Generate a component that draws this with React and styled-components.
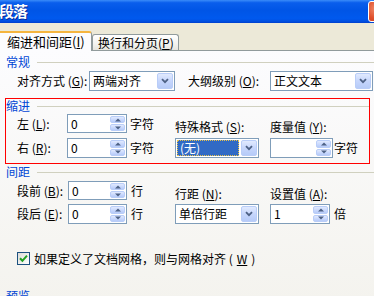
import React from 'react';
import styled, { createGlobalStyle } from 'styled-components';

const GlobalStyle = createGlobalStyle`
  html, body { margin: 0; padding: 0; background: #ECE9D8; }
  body {
    font-family: "Noto Sans CJK SC", "Liberation Sans", sans-serif;
    font-size: 12px;
    color: #000;
  }
  * { box-sizing: border-box; }
`;

const Dialog = styled.div`
  width: 374px;
  height: 296px;
  overflow: hidden;
  display: flex;
  flex-direction: column;
  background: #ECE9D8;
`;

const TitleBar = styled.div`
  height: 23px;
  flex-shrink: 0;
  display: flex;
  align-items: flex-start;
  justify-content: space-between;
  background: linear-gradient(180deg, #3A8CF9 0%, #0A5EEC 12%, #0055E6 45%, #0059EE 80%, #0050E2 92%, #003FCC 100%);
`;

const Title = styled.div`
  color: #fff;
  font-weight: bold;
  font-size: 15px;
  line-height: 21px;
  margin-left: -1px;
  letter-spacing: -1px;
  text-shadow: 1px 1px 0 #0A2A9A;
`;

const CloseButton = styled.div`
  width: 21px;
  height: 21px;
  margin-top: 1px;
  margin-right: -15px;
  flex-shrink: 0;
  border: 1px solid #fff;
  border-radius: 3px;
  background: radial-gradient(circle at 35% 35%, #F08A6A 0%, #E0502C 55%, #C4391A 100%);
`;

const TabStrip = styled.div`
  height: 27px;
  flex-shrink: 0;
  padding-top: 8px;
  display: flex;
  align-items: flex-end;
  position: relative;
  z-index: 1;
`;

const Tab = styled.div`
  width: ${p => p.$width}px;
  height: ${p => (p.$active ? 20 : 16)}px;
  margin-bottom: ${p => (p.$active ? -1 : 0)}px;
  margin-left: ${p => (p.$active ? -2 : 0)}px;
  padding-left: ${p => (p.$active ? 8 : 5)}px;
  border: 1px solid #919B9C;
  border-bottom: none;
  border-top: ${p => (p.$active ? '2px solid #F5B53F' : '1px solid #919B9C')};
  border-radius: 3px 3px 0 0;
  background: ${p => (p.$active ? '#FCFCFE' : 'linear-gradient(180deg, #FFFFFF 0%, #F3F3EF 60%, #E6E5DE 100%)')};
  display: flex;
  align-items: center;
  white-space: nowrap;
  line-height: 14px;
  font-size: ${p => (p.$active ? 13 : 12)}px;
`;

const Panel = styled.div`
  flex: 1;
  border-top: 1px solid #919B9C;
  background: linear-gradient(180deg, #FCFCFE 0%, #F4F3EE 100%);
  padding-top: 4px;
`;

const GroupHeader = styled.div`
  display: flex;
  align-items: center;
  height: 14px;
  margin-top: ${p => p.$top || 0}px;
  padding-left: ${p => p.$inset}px;
  color: #0046D5;
  font-size: 12px;
  line-height: 14px;

  &::after {
    content: '';
    flex: 1;
    height: 1px;
    margin-left: 7px;
    margin-top: 1px;
    background: #D0D0BF;
  }
`;

const Key = styled.span`
  text-decoration: underline;
`;

const GeneralRow = styled.div`
  display: flex;
  align-items: center;
  height: 20px;
  margin-top: 2px;
  padding-left: 17px;
`;

const RowLabel = styled.div`
  width: ${p => p.$width}px;
  margin-left: ${p => p.$gap || 0}px;
  flex-shrink: 0;
  white-space: nowrap;
  line-height: 14px;
`;

const RedBox = styled.div`
  width: 365px;
  margin: 7px 0 0 5px;
  padding-bottom: 5px;
  border: 1px solid #FF0000;
`;

const FieldGrid = styled.div`
  display: grid;
  grid-template-columns: ${p => p.$cols};
  grid-template-rows: 19px 20px;
  grid-template-areas:
    "l1 i1 u1 sl . ml ml"
    "l2 i2 u2 ss . ms mu";
  row-gap: ${p => p.$gap}px;
  margin-top: ${p => p.$top}px;
  padding-left: ${p => p.$inset}px;
`;

const FieldLabel = styled.div`
  grid-area: ${p => p.$area};
  align-self: ${p => (p.$above ? 'end' : 'center')};
  margin-bottom: ${p => (p.$above ? -1 : 0)}px;
  white-space: nowrap;
  line-height: 14px;
`;

const Unit = styled.div`
  grid-area: ${p => p.$area};
  align-self: center;
  padding-left: ${p => p.$pad}px;
  white-space: nowrap;
  line-height: 14px;
`;

const Field = styled.div`
  grid-area: ${p => p.$area};
  width: ${p => (p.$width ? `${p.$width}px` : 'auto')};
  height: ${p => (p.$height ? `${p.$height}px` : '100%')};
  flex-shrink: 0;
  display: flex;
  align-items: stretch;
  border: 1px solid #7F9DB9;
  background: #fff;
`;

const FieldText = styled.div`
  flex: 1;
  display: flex;
  align-items: center;
  padding-left: ${p => (p.$selected ? 3 : 3)}px;
  margin: ${p => (p.$selected ? '1px' : '0')};
  white-space: nowrap;
  overflow: hidden;
  line-height: 14px;
  background: ${p => (p.$selected ? '#316AC5' : 'transparent')};
  color: ${p => (p.$selected ? '#fff' : '#000')};
  outline: ${p => (p.$selected ? '1px dotted #E8C24A' : 'none')};
  outline-offset: -1px;
`;

const DropButton = styled.div`
  width: 16px;
  margin: 1px;
  border: 1px solid #B9CDF8;
  border-radius: 2px;
  background: linear-gradient(180deg, #E1EAFE 0%, #C6D6FC 50%, #B6CBF8 100%);
  display: flex;
  align-items: center;
  justify-content: center;
`;

const SpinButtons = styled.div`
  width: 15px;
  margin: 1px;
  display: flex;
  flex-direction: column;
  gap: 1px;
`;

const SpinHalf = styled.div`
  flex: 1;
  border: 1px solid #B9CDF8;
  border-radius: 2px;
  background: linear-gradient(180deg, #E1EAFE 0%, #C6D6FC 60%, #B6CBF8 100%);
  display: flex;
  align-items: center;
  justify-content: center;
`;

const CheckRow = styled.div`
  display: flex;
  align-items: center;
  gap: 4px;
  margin-top: 27px;
  padding-left: 17px;
  height: 14px;
  white-space: nowrap;
  font-size: 12px;
`;

const CheckBox = styled.div`
  width: 13px;
  height: 13px;
  flex-shrink: 0;
  border: 1px solid #1C5180;
  background: linear-gradient(135deg, #DCDCD7 0%, #FFFFFF 100%);
  display: flex;
  align-items: center;
  justify-content: center;
`;

const Chevron = () => (
  <svg width="8" height="6" viewBox="0 0 8 6">
    <path d="M1 1.2 L4 4.2 L7 1.2" fill="none" stroke="#4D6185" strokeWidth="1.8" />
  </svg>
);

const Arrow = ({ up }) => (
  <svg width="6" height="4" viewBox="0 0 6 4">
    <path d={up ? 'M0 3.5 L3 0.5 L6 3.5 Z' : 'M0 0.5 L3 3.5 L6 0.5 Z'} fill="#4D6185" />
  </svg>
);

const Combo = ({ area, width, height, value, selected }) => (
  <Field $area={area} $width={width} $height={height}>
    <FieldText $selected={selected}>{value}</FieldText>
    <DropButton>
      <Chevron />
    </DropButton>
  </Field>
);

const Spin = ({ area, value }) => (
  <Field $area={area}>
    <FieldText>{value}</FieldText>
    <SpinButtons>
      <SpinHalf><Arrow up /></SpinHalf>
      <SpinHalf><Arrow /></SpinHalf>
    </SpinButtons>
  </Field>
);

export default function App() {
  return (
    <>
      <GlobalStyle />
      <Dialog>
        <TitleBar>
          <Title>段落</Title>
          <CloseButton />
        </TitleBar>

        <TabStrip>
          <Tab $active $width={94}>缩进和间距(<Key>I</Key>)</Tab>
          <Tab $width={87}>换行和分页(<Key>P</Key>)</Tab>
        </TabStrip>

        <Panel>
          <GroupHeader $inset={6}>常规</GroupHeader>
          <GeneralRow>
            <RowLabel $width={72}>对齐方式 (<Key>G</Key>):</RowLabel>
            <Combo width={86} height={20} value="两端对齐" />
            <RowLabel $width={82} $gap={13}>大纲级别 (<Key>O</Key>):</RowLabel>
            <Combo width={103} height={20} value="正文文本" />
          </GeneralRow>

          <RedBox>
            <GroupHeader $inset={0}>缩进</GroupHeader>
            <FieldGrid $cols="50px 60px 48px 84px 11px 63px auto" $gap={5} $top={1} $inset={11}>
              <FieldLabel $area="l1">左 (<Key>L</Key>):</FieldLabel>
              <Spin area="i1" value="0" />
              <Unit $area="u1" $pad={3}>字符</Unit>
              <FieldLabel $area="l2">右 (<Key>R</Key>):</FieldLabel>
              <Spin area="i2" value="0" />
              <Unit $area="u2" $pad={3}>字符</Unit>
              <FieldLabel $area="sl" $above>特殊格式 (<Key>S</Key>):</FieldLabel>
              <Combo area="ss" value="(无)" selected />
              <FieldLabel $area="ml" $above>度量值 (<Key>Y</Key>):</FieldLabel>
              <Spin area="ms" value="" />
              <Unit $area="mu" $pad={1}>字符</Unit>
            </FieldGrid>
          </RedBox>

          <GroupHeader $inset={6} $top={1}>间距</GroupHeader>
          <FieldGrid $cols="51px 59px 48px 84px 11px 60px auto" $gap={4} $top={2} $inset={17}>
            <FieldLabel $area="l1">段前 (<Key>B</Key>):</FieldLabel>
            <Spin area="i1" value="0" />
            <Unit $area="u1" $pad={4}>行</Unit>
            <FieldLabel $area="l2">段后 (<Key>E</Key>):</FieldLabel>
            <Spin area="i2" value="0" />
            <Unit $area="u2" $pad={4}>行</Unit>
            <FieldLabel $area="sl" $above>行距 (<Key>N</Key>):</FieldLabel>
            <Combo area="ss" value="单倍行距" />
            <FieldLabel $area="ml" $above>设置值 (<Key>A</Key>):</FieldLabel>
            <Spin area="ms" value="1" />
            <Unit $area="mu" $pad={4}>倍</Unit>
          </FieldGrid>

          <CheckRow>
            <CheckBox>
              <svg width="9" height="9" viewBox="0 0 9 9">
                <path d="M1 4.2 L3.4 6.8 L8 1.6" fill="none" stroke="#21A121" strokeWidth="2" />
              </svg>
            </CheckBox>
            如果定义了文档网格，则与网格对齐 (<Key>W</Key>)
          </CheckRow>

          <GroupHeader $inset={6} $top={24}>预览</GroupHeader>
        </Panel>
      </Dialog>
    </>
  );
}
